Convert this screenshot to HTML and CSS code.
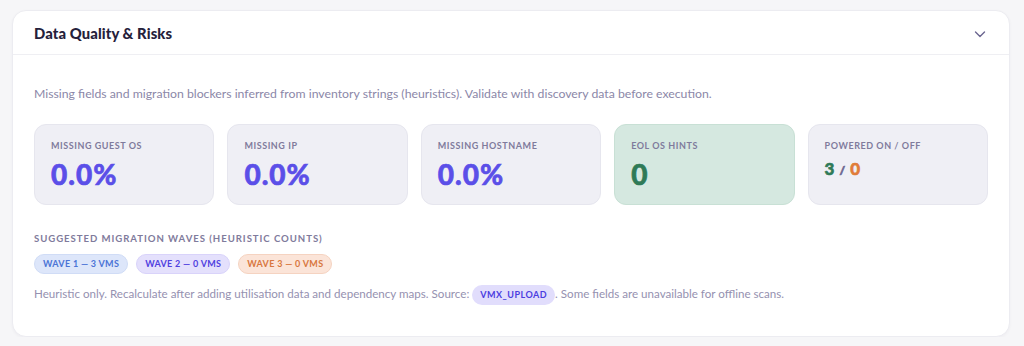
FILE: index.html
```html
<!DOCTYPE html>
<html lang="en">
<head>
    <meta charset="UTF-8">
    <meta name="viewport" content="width=device-width, initial-scale=1.0">
    <title>Data Quality & Risks</title>
    <link rel="stylesheet" href="styles.css">
</head>
<body>
    <section class="panel">
        <header class="panel-head">
            <h2>Data Quality &amp; Risks</h2>
            <svg class="chevron" width="14" height="14" viewBox="0 0 14 14">
                <path d="M2.5 5 L7 9.5 L11.5 5" fill="none" stroke="#6b6690" stroke-width="1.4" stroke-linecap="round" stroke-linejoin="round"/>
            </svg>
        </header>

        <div class="panel-body">
            <p class="intro">Missing fields and migration blockers inferred from inventory strings (heuristics). Validate with discovery data before execution.</p>

            <div class="stats">
                <div class="stat">
                    <div class="stat-label">Missing guest OS</div>
                    <div class="stat-value">0.0%</div>
                </div>
                <div class="stat">
                    <div class="stat-label">Missing IP</div>
                    <div class="stat-value">0.0%</div>
                </div>
                <div class="stat">
                    <div class="stat-label">Missing hostname</div>
                    <div class="stat-value">0.0%</div>
                </div>
                <div class="stat stat-ok">
                    <div class="stat-label">EOL OS hints</div>
                    <div class="stat-value green">0</div>
                </div>
                <div class="stat">
                    <div class="stat-label">Powered on / off</div>
                    <div class="stat-value small"><span class="green">3</span> <span class="sep">/</span> <span class="orange">0</span></div>
                </div>
            </div>

            <div class="section-label">Suggested migration waves (heuristic counts)</div>
            <div class="waves">
                <span class="pill pill-blue">Wave 1 — 3 VMs</span>
                <span class="pill pill-purple">Wave 2 — 0 VMs</span>
                <span class="pill pill-orange">Wave 3 — 0 VMs</span>
            </div>

            <p class="note">Heuristic only. Recalculate after adding utilisation data and dependency maps. Source: <span class="chip">VMX_UPLOAD</span>. Some fields are unavailable for offline scans.</p>
        </div>
    </section>
</body>
</html>
```

FILE: styles.css
```css
* {
    margin: 0;
    padding: 0;
    box-sizing: border-box;
}

body {
    background: #f6f6f8;
    font-family: 'Lato', 'Noto Sans', sans-serif;
    color: #2a2540;
    padding: 10px 14px 0 12px;
}

/* card */
.panel {
    background: #fff;
    border: 1px solid #ececf1;
    border-radius: 14px;
    box-shadow: 0 1px 3px rgba(40, 35, 80, 0.04);
    width: 998px;
}

.panel-head {
    display: flex;
    justify-content: space-between;
    align-items: center;
    height: 44px;
    padding: 0 22px 0 21px;
    border-bottom: 1px solid #efeff3;
}

.panel-head h2 {
    font-size: 14.8px;
    font-weight: 900;
    color: #25213b;
    letter-spacing: 0.1px;
}

.chevron {
    margin-top: 2px;
}

.panel-body {
    padding: 31px 21px 31px;
}

.intro {
    font-size: 12.25px;
    color: #8b87a8;
    line-height: 16px;
}

/* stat tiles */
.stats {
    display: grid;
    grid-template-columns: repeat(5, 1fr);
    gap: 13px;
    margin-top: 22px;
}

.stat {
    height: 81px;
    background: #efeff5;
    border: 1px solid #e6e6ee;
    border-radius: 12px;
    padding: 15px 16px;
}

.stat-ok {
    background: #d5e8e0;
    border-color: #c8e0d5;
}

.stat-label {
    font-size: 9px;
    font-weight: 700;
    letter-spacing: 0.55px;
    text-transform: uppercase;
    color: #7f7b9c;
}

.stat-value {
    margin-top: 7px;
    font-size: 28px;
    font-weight: 900;
    color: #5b4fe8;
    letter-spacing: 1px;
    line-height: 32px;
    -webkit-text-stroke: 0.6px currentColor;
}

.stat-value.small {
    font-size: 17px;
    margin-top: 2px;
    letter-spacing: 0.5px;
}

.green {
    color: #2f7a57;
}

.orange {
    color: #e07c3a;
}

.sep {
    color: #6b6690;
    font-size: 12px;
}

/* waves */
.section-label {
    margin-top: 28px;
    font-size: 9.6px;
    font-weight: 700;
    letter-spacing: 0.95px;
    text-transform: uppercase;
    color: #7f7b9c;
}

.waves {
    display: flex;
    gap: 8px;
    margin-top: 10px;
}

.pill {
    display: inline-block;
    font-size: 9px;
    font-weight: 700;
    letter-spacing: 0.3px;
    text-transform: uppercase;
    line-height: 18px;
    padding: 0 8px;
    border-radius: 10px;
    border: 1px solid transparent;
}

.pill-blue {
    background: #dde6fa;
    border-color: #d0dcf6;
    color: #4b74d6;
}

.pill-purple {
    background: #e4e0fc;
    border-color: #d9d3fa;
    color: #5040e0;
}

.pill-orange {
    background: #fbe4d8;
    border-color: #f5d3c1;
    color: #d8773f;
}

.note {
    margin-top: 10px;
    font-size: 11.6px;
    color: #9591b0;
    line-height: 20px;
}

.chip {
    display: inline-block;
    background: #e1ddfc;
    color: #4b3de0;
    font-size: 9px;
    font-weight: 700;
    letter-spacing: 0.5px;
    line-height: 20px;
    padding: 0 8px;
    border-radius: 10px;
    vertical-align: middle;
}
```
